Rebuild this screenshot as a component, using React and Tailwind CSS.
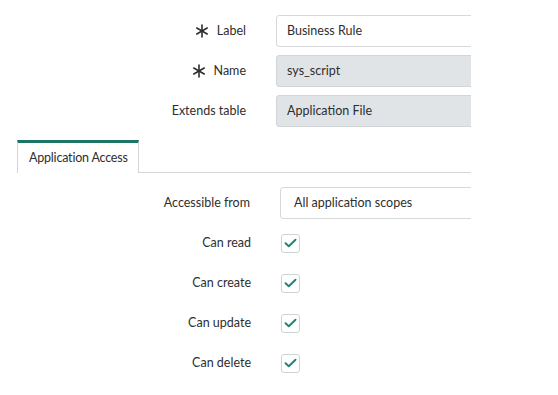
import React from "react";

const font = { fontFamily: "'Source Sans Pro', Lato, 'Noto Sans', sans-serif" };

function Asterisk() {
  return (
    <svg width="14" height="14" viewBox="0 0 14 14" className="mr-[8px]">
      <g stroke="#2e2e2e" strokeWidth="1.6" strokeLinecap="round">
        <line x1="7" y1="1" x2="7" y2="13" />
        <line x1="1.8" y1="4" x2="12.2" y2="10" />
        <line x1="1.8" y1="10" x2="12.2" y2="4" />
      </g>
    </svg>
  );
}

function FieldRow({ label, required, value, readOnly }) {
  return (
    <div className="flex items-center h-[32px]">
      <div className="w-[246px] shrink-0 flex items-center justify-end text-[12.5px] text-[#2e2e2e]">
        {required && <Asterisk />}
        <span>{label}</span>
      </div>
      <div
        className={`ml-[30px] h-[32px] w-[260px] shrink-0 flex items-center pl-[10px] rounded-[3px] border text-[12.5px] text-[#2e2e2e] ${
          readOnly
            ? "bg-[#e1e4e6] border-[#d3d6d9]"
            : "bg-white border-[#d6d8da]"
        }`}
      >
        {value}
      </div>
    </div>
  );
}

function CheckRow({ label }) {
  return (
    <div className="flex items-center h-[20px]">
      <div className="w-[251px] shrink-0 text-right text-[12.5px] text-[#2e2e2e]">
        {label}
      </div>
      <div className="ml-[30px] w-[19px] h-[19px] shrink-0 rounded-[3px] border border-[#cfd3d6] bg-white flex items-center justify-center">
        <svg width="13" height="10" viewBox="0 0 13 10">
          <path
            d="M1.5 5.2 L4.8 8.2 L11.5 1.8"
            fill="none"
            stroke="#1f8476"
            strokeWidth="2"
            strokeLinecap="round"
            strokeLinejoin="round"
          />
        </svg>
      </div>
    </div>
  );
}

export default function App() {
  return (
    <div className="w-[558px] h-[395px] bg-white" style={font}>
      <div className="w-[471px] h-full overflow-hidden">
        <div className="pt-[15px] flex flex-col gap-[8px]">
          <FieldRow label="Label" required value="Business Rule" />
          <FieldRow label="Name" required value="sys_script" readOnly />
          <FieldRow label="Extends table" value="Application File" readOnly />
        </div>

        <div className="mt-[13px] flex items-end">
          <div className="w-[17px] shrink-0" />
          <div className="w-[122px] h-[33px] shrink-0 border-t-[3px] border-t-[#1d7566] border-l border-r border-[#d4d6d8] flex items-center pl-[11px] text-[12.5px] tracking-[-0.2px] whitespace-nowrap text-[#2e2e2e]">
            Application Access
          </div>
          <div className="flex-1 border-b border-[#d4d6d8]" />
        </div>

        <div className="mt-[14px] flex items-center h-[32px]">
          <div className="w-[250px] shrink-0 text-right text-[12.5px] text-[#2e2e2e]">
            Accessible from
          </div>
          <div className="ml-[30px] h-[32px] w-[260px] shrink-0 flex items-center pl-[13px] rounded-[3px] border border-[#d6d8da] bg-white text-[12.5px] text-[#2e2e2e]">
            All application scopes
          </div>
        </div>

        <div className="mt-[14px] flex flex-col gap-[20px]">
          <CheckRow label="Can read" />
          <CheckRow label="Can create" />
          <CheckRow label="Can update" />
          <CheckRow label="Can delete" />
        </div>
      </div>
    </div>
  );
}
